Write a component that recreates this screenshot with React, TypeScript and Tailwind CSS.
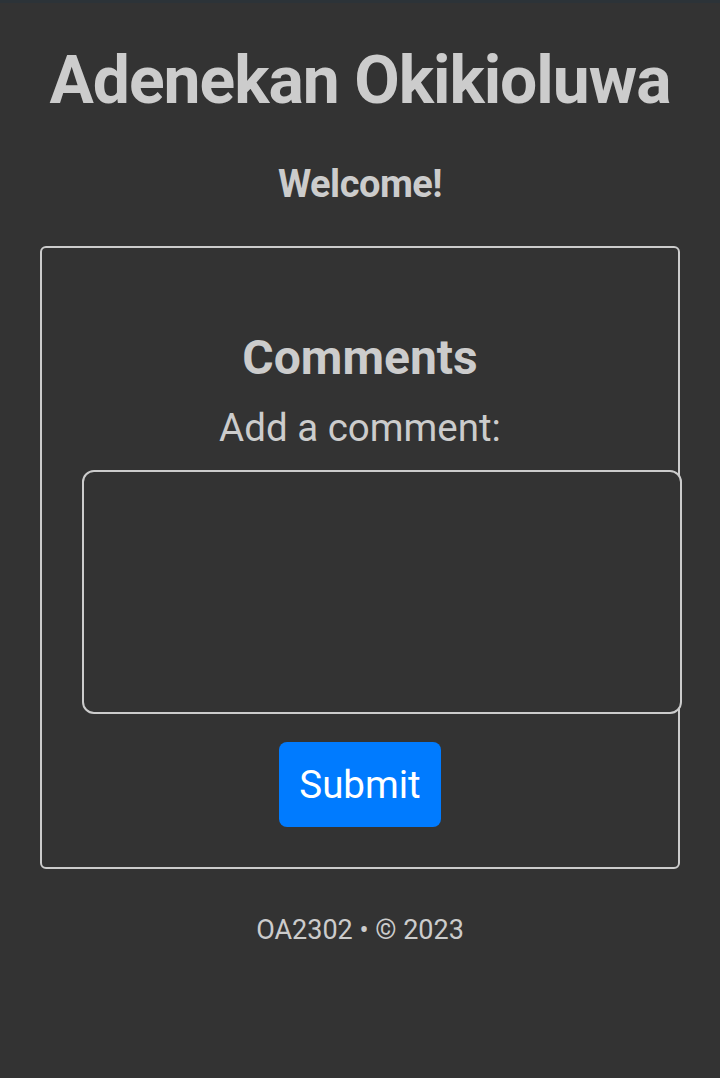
import React from "react";

export default function App() {
  return (
    <div className="min-h-[1078px] w-full bg-[#333333] text-[#cccccc]" style={{ fontFamily: "Roboto, 'Noto Sans', sans-serif" }}>
      <div className="h-[3px] bg-[#2c3338]" />
      <div className="flex flex-col items-center">
        <h1 className="mt-[42px] text-[66px] font-bold leading-[72px] tracking-[-1px]">Adenekan Okikioluwa</h1>
        <p className="mt-[45px] text-[38px] font-bold leading-[44px] tracking-[-0.5px]">Welcome!</p>
      </div>
      <div className="mx-[40px] mt-[40px] h-[623px] rounded-[6px] border-2 border-[#cccccc] flex flex-col items-center">
        <h2 className="mt-[82px] text-[48px] font-bold leading-[56px]">Comments</h2>
        <label className="mt-[20px] text-[38.5px] leading-[44px]">Add a comment:</label>
        <div className="self-start ml-[40px] mt-[20px] w-[600px] h-[244px] rounded-[12px] border-2 border-[#cccccc] bg-[#333333]" />
        <button className="mt-[28px] w-[162px] h-[85px] rounded-[8px] bg-[#007bff] text-white text-[38.5px] leading-[44px]">Submit</button>
      </div>
      <p className="mt-[45px] text-center text-[27px] leading-[32px]">OA2302 • © 2023</p>
    </div>
  );
}
